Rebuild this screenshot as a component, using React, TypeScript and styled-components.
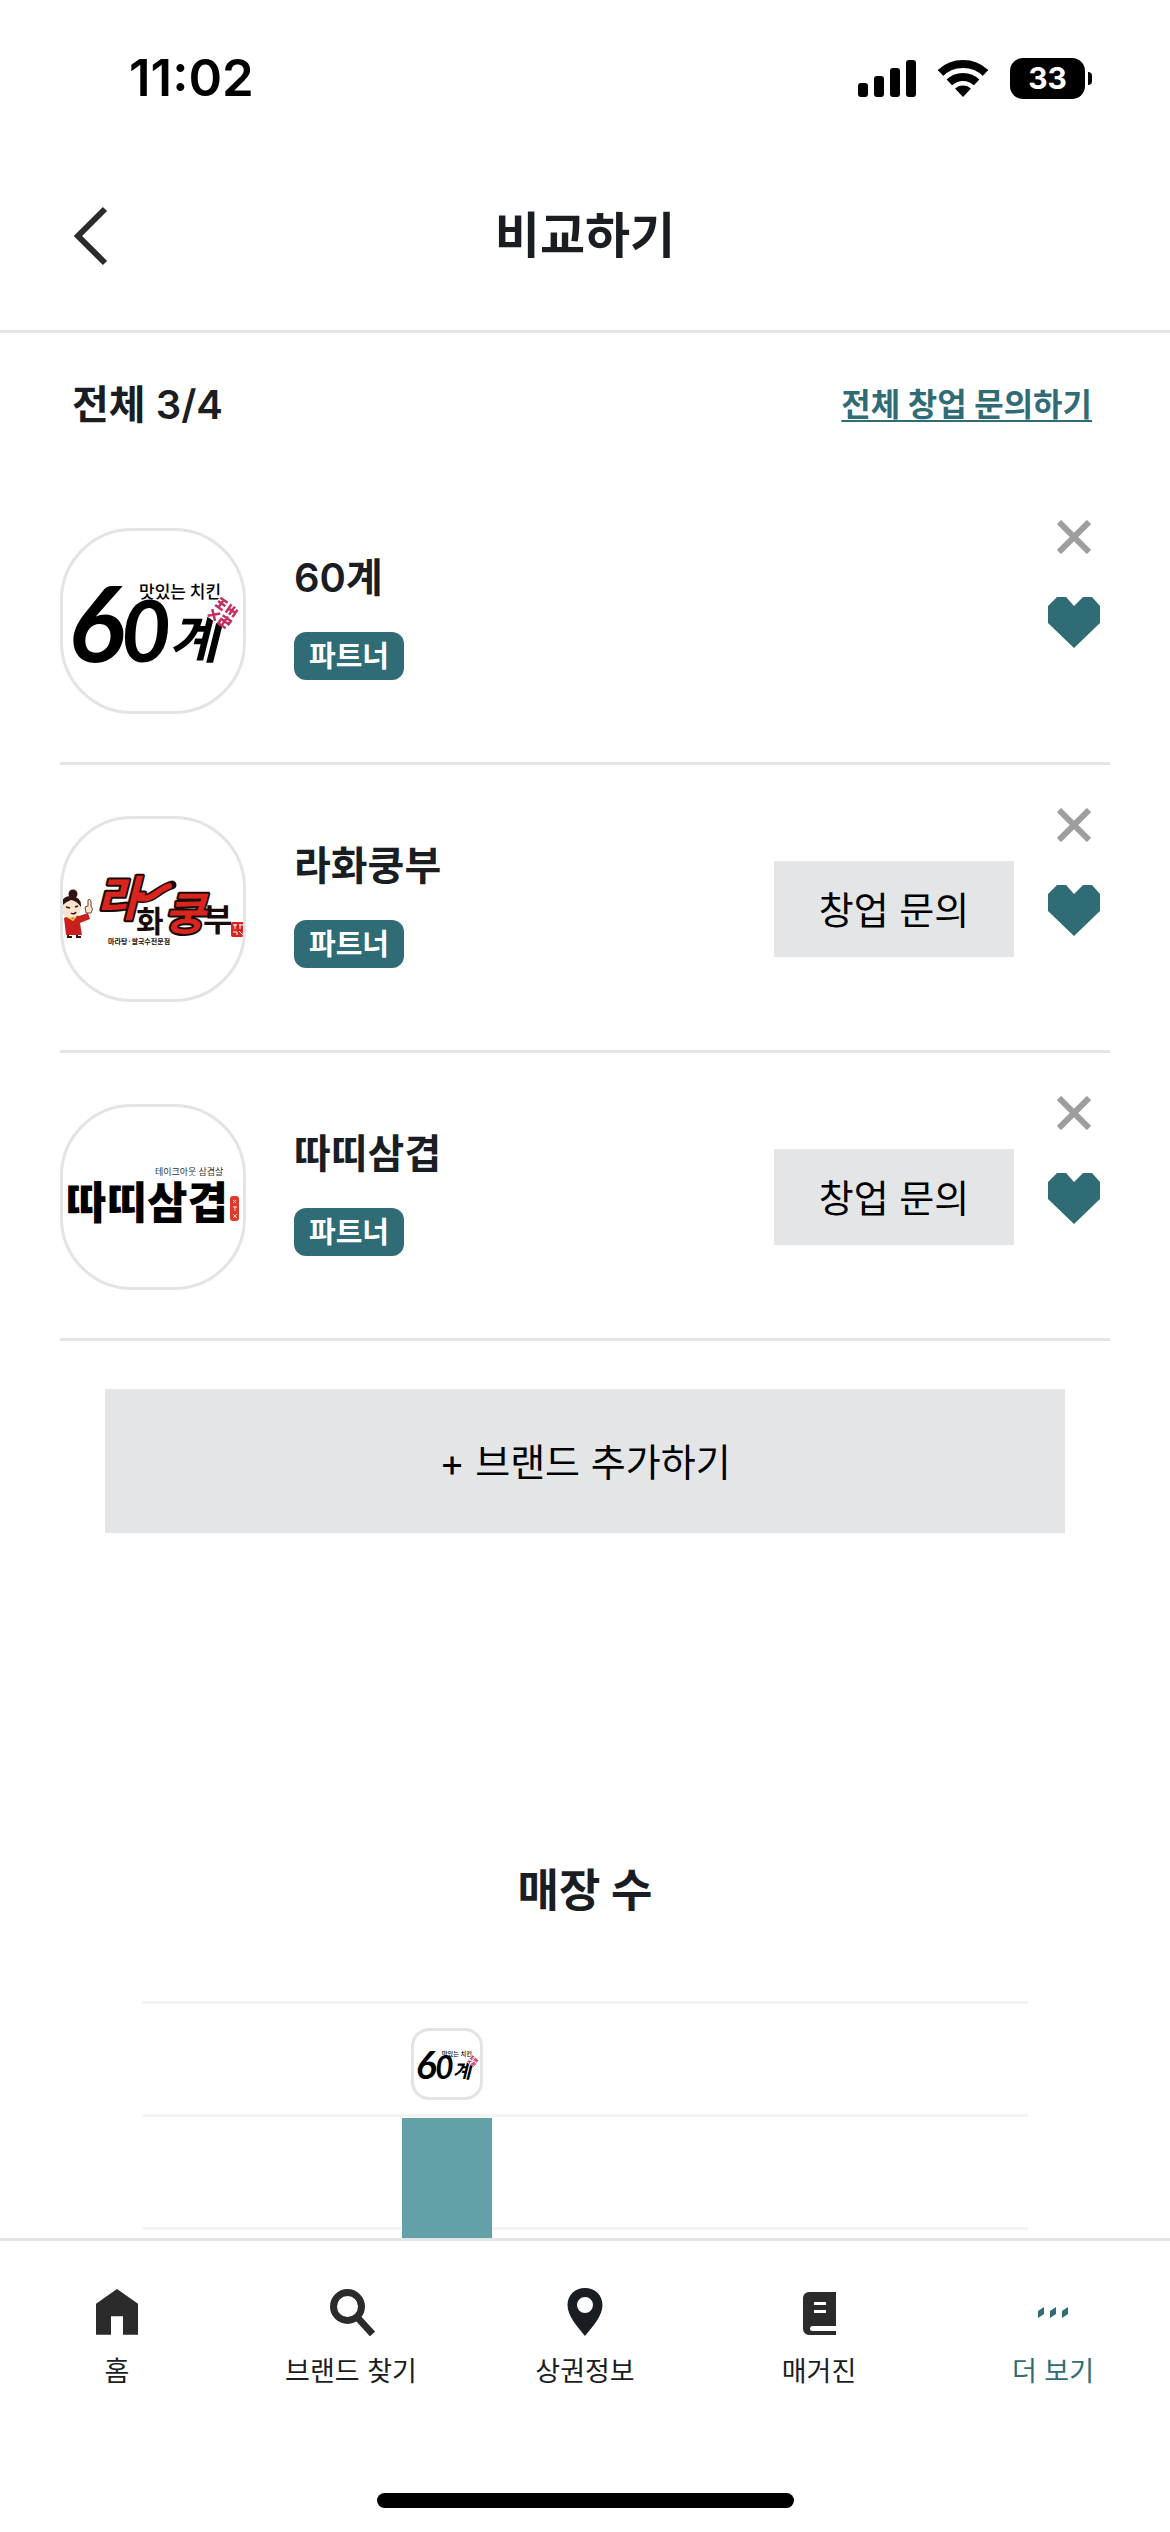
import React from "react";
import styled, { createGlobalStyle } from "styled-components";

const color = {
  text: "#1a1d22",
  icon: "#2b2b2b",
  teal: "#2f6c75",
  bar: "#62a1a8",
  line: "#e3e4e6",
  grid: "#f4f4f5",
  fill: "#e4e5e7",
  mute: "#9e9e9e",
};

const GlobalStyle = createGlobalStyle`
  *, *::before, *::after { box-sizing: border-box; }
  body {
    margin: 0;
    background: #fff;
    color: ${color.text};
    font-family: Inter, "Noto Sans CJK KR", sans-serif;
  }
  button { font: inherit; color: inherit; border: 0; padding: 0; background: none; cursor: pointer; }
  h1, h2, ul { margin: 0; padding: 0; }
  ul { list-style: none; }
  svg { display: block; }
`;

const Screen = styled.div`
  display: flex;
  flex-direction: column;
  height: 100vh;
  overflow: hidden;
`;

const StatusBar = styled.div`
  display: flex;
  justify-content: space-between;
  align-items: center;
  padding: 47px 78px 32px 129px;
  color: #000;
`;

const Clock = styled.time`
  font-size: 51px;
  line-height: 62px;
  font-weight: 600;
`;

const StatusIcons = styled.div`
  display: flex;
  align-items: center;
  gap: 22px;
`;

const Battery = styled.div`
  display: flex;
  align-items: center;
  gap: 3px;
`;

const BatteryBody = styled.span`
  width: 75px;
  border-radius: 13px;
  background: #000;
  color: #fff;
  font-size: 30px;
  line-height: 41px;
  font-weight: 700;
  text-align: center;
`;

const BatteryCap = styled.span`
  width: 4px;
  height: 13px;
  border-radius: 0 4px 4px 0;
  background: #000;
`;

const Header = styled.header`
  display: grid;
  grid-template-columns: 1fr auto 1fr;
  align-items: center;
  height: 192px;
  padding: 0 72px;
  border-bottom: 3px solid ${color.line};
  flex: none;
`;

const BackButton = styled.button`
  justify-self: start;
`;

const PageTitle = styled.h1`
  font-size: 49px;
  line-height: 72px;
  font-weight: 700;
`;

const Main = styled.main`
  flex: 1;
  min-height: 0;
  overflow-y: auto;
  scrollbar-width: none;
`;

const Summary = styled.div`
  display: flex;
  justify-content: space-between;
  align-items: center;
  height: 144px;
  padding: 0 78px 0 72px;
`;

const Count = styled.span`
  font-size: 40px;
  line-height: 56px;
  font-weight: 600;
`;

const AskAll = styled.a`
  color: ${color.teal};
  font-size: 32px;
  line-height: 56px;
  font-weight: 700;
  text-underline-offset: 4px;
  text-decoration-thickness: 2px;
`;

const BrandList = styled.ul`
  padding: 0 60px;
`;

const BrandRow = styled.li`
  display: flex;
  align-items: center;
  min-height: 288px;
  padding: 24px 10px 21px 0;
  border-bottom: 3px solid ${color.line};
`;

const LogoFrame = styled.div<{ $size: number; $radius: number }>`
  flex: none;
  width: ${(p) => p.$size}px;
  height: ${(p) => p.$size}px;
  border: 3px solid ${color.line};
  border-radius: ${(p) => p.$radius}px;
  background: #fff;
  overflow: hidden;

  svg {
    width: 100%;
    height: 100%;
  }
`;

const BrandInfo = styled.div`
  flex: 1;
  display: flex;
  flex-direction: column;
  align-items: flex-start;
  gap: 26px;
  padding: 0 48px 12px;
`;

const BrandName = styled.h2`
  font-size: 40px;
  line-height: 56px;
  font-weight: 600;
`;

const Badge = styled.span`
  padding: 2px 15px 0;
  border-radius: 12px;
  background: ${color.teal};
  color: #fff;
  font-size: 29px;
  line-height: 46px;
  font-weight: 600;
`;

const FillButton = styled.button`
  padding-bottom: 4px;
  background: ${color.fill};
  color: #000;
  font-size: 38px;
`;

const AskButton = styled(FillButton)`
  width: 240px;
  height: 96px;
  margin-right: 34px;
`;

const RowActions = styled.div`
  align-self: flex-start;
  display: flex;
  flex-direction: column;
  align-items: center;
  gap: 36px;
  padding-top: 12px;
`;

const IconButton = styled.button`
  display: grid;
  place-items: center;
  width: 52px;
  min-height: 48px;
`;

const AddBar = styled.div`
  display: flex;
  padding: 48px 105px 0;
`;

const AddButton = styled(FillButton)`
  flex: 1;
  height: 144px;
`;

const ChartSection = styled.section`
  padding: 322px 142px 60px;
`;

const ChartTitle = styled.h2`
  padding-bottom: 74px;
  font-size: 45px;
  line-height: 72px;
  font-weight: 700;
  text-align: center;
`;

const Plot = styled.div`
  display: grid;
  grid-template-areas: "plot";
`;

const GridLines = styled.div`
  grid-area: plot;
`;

const GridLine = styled.div`
  height: 113px;
  border-top: 3px solid ${color.grid};
`;

const Bars = styled.div`
  grid-area: plot;
  display: flex;
  justify-content: center;
  gap: 48px;
`;

const BarColumn = styled.div`
  display: flex;
  flex-direction: column;
  align-items: center;
  justify-content: flex-end;
  gap: 18px;
  width: 90px;
`;

const Bar = styled.div`
  width: 100%;
  background: ${color.bar};
`;

const BottomNav = styled.nav`
  flex: none;
  border-top: 3px solid ${color.line};
  background: #fff;
`;

const Tabs = styled.ul`
  display: grid;
  grid-template-columns: repeat(5, 1fr);
  padding: 47px 0 101px;
`;

const Tab = styled.a<{ $active?: boolean }>`
  display: flex;
  flex-direction: column;
  align-items: center;
  gap: 16px;
  color: ${(p) => (p.$active ? color.teal : color.text)};
  font-size: 27px;
  line-height: 40px;
  text-decoration: none;
`;

const HomeIndicator = styled.div`
  width: 417px;
  height: 15px;
  margin: 0 auto 24px;
  border-radius: 8px;
  background: #000;
`;

const SignalIcon = () => (
  <svg width="58" height="37" viewBox="0 0 58 37" aria-hidden="true">
    <rect x="0" y="23" width="10" height="14" rx="3" />
    <rect x="16" y="16" width="10" height="21" rx="3" />
    <rect x="32" y="8" width="10" height="29" rx="3" />
    <rect x="48" y="0" width="10" height="37" rx="3" />
  </svg>
);

const WifiIcon = () => (
  <svg width="50" height="37" viewBox="0 0 50 37" aria-hidden="true">
    <clipPath id="wifi-fan">
      <path d="M25 37L-5 5V-5H55V5Z" />
    </clipPath>
    <g clipPath="url(#wifi-fan)">
      <circle cx="25" cy="37" r="33" fill="none" stroke="#000" strokeWidth="8" />
      <circle cx="25" cy="37" r="20" fill="none" stroke="#000" strokeWidth="8" />
      <circle cx="25" cy="37" r="11.5" />
    </g>
  </svg>
);

const BackIcon = () => (
  <svg width="36" height="60" viewBox="0 0 36 60" fill="none" stroke={color.icon} strokeWidth="6" aria-hidden="true">
    <path d="M33 3L6 30L33 57" />
  </svg>
);

const CloseIcon = () => (
  <svg width="34" height="34" viewBox="0 0 34 34" stroke={color.mute} strokeWidth="6" aria-hidden="true">
    <path d="M2 2L32 32M32 2L2 32" />
  </svg>
);

const HeartIcon = () => (
  <svg width="52" height="51" viewBox="0 0 52 51" fill={color.teal} aria-hidden="true">
    <path d="M9 0H18L26 9L35 0H44L52 9V26L26 51L0 26V9Z" />
  </svg>
);

const HomeIcon = () => (
  <svg width="48" height="48" viewBox="0 0 48 48" fill={color.icon} aria-hidden="true">
    <path d="M24 1L45 18V53H30V32H18V53H3V18Z" transform="scale(1 .88)" />
  </svg>
);

const SearchIcon = () => (
  <svg width="48" height="48" viewBox="0 0 48 48" fill="none" stroke={color.icon} aria-hidden="true">
    <circle cx="20.500" cy="18.500" r="14" strokeWidth="7" />
    <path d="M30 29L45.500 46" strokeWidth="7" />
  </svg>
);

const PinIcon = () => (
  <svg width="48" height="48" viewBox="0 0 48 48" fill={color.text} fillRule="evenodd" aria-hidden="true">
    <path d="M24 0C14 0 6.500 7 6.500 17C6.500 28 16 38 24 48C32 38 41.500 28 41.500 17C41.500 7 34 0 24 0ZM24 9A8 8 0 1 1 24 25A8 8 0 1 1 24 9Z" />
  </svg>
);

const BookIcon = () => (
  <svg width="48" height="48" viewBox="0 0 48 48" aria-hidden="true">
    <path fill={color.icon} d="M14 4H41V38H17.500A2.500 2.500 0 0 0 17.500 43H41V47H14A6 6 0 0 1 8 41V10A6 6 0 0 1 14 4Z" />
    <path stroke="#fff" strokeWidth="3" d="M19 15.500H31M19 23.500H31" />
  </svg>
);

const MoreIcon = () => (
  <svg width="48" height="48" viewBox="0 0 48 48" fill={color.teal} aria-hidden="true">
    <path d="M9 23L15 19V26L9 30ZM21 23L27 19V26L21 30ZM33 23L39 19V26L33 30Z" />
  </svg>
);

const hangul = '"Noto Sans CJK KR", sans-serif';

const SixtyLogo = () => (
  <svg viewBox="0 0 180 180" role="img" aria-label="60계 로고">
    <g fontStyle="italic" fill="#000">
      <text x="5" y="131" fontFamily="Lato, sans-serif" fontSize="106" fontWeight="700">6</text>
      <text x="58" y="131" fontFamily="Lato, sans-serif" fontSize="86" fontWeight="700">0</text>
      <text x="106" y="127" fontFamily={hangul} fontSize="54" fontWeight="700">계</text>
    </g>
    <text x="76" y="67" fontFamily={hangul} fontSize="17" fontWeight="500">맛있는 치킨</text>
    <g transform="rotate(35 160 82)" fill="none" stroke="#c2315f" strokeWidth="2.500">
      <path fill="#fff" stroke="none" d="M148 69H172V94H148Z" />
      <path d="M149 71H158M149 75H158M153 70V80M149 80H158M162 70V80M166 70V80M170 71V80M162 75H171M149 85L158 93M158 84L149 93M161 84H171V88H162V93H171M166 82V94" />
    </g>
  </svg>
);

const LahwaLogo = () => (
  <svg viewBox="0 0 180 180" role="img" aria-label="라화쿵부 로고">
    <path d="M1 99Q9 94 16 97L25 94L27 100L17 104L19 116H3Z" fill="#c9201f" />
    <path d="M3 97L10 101L13 97" fill="none" stroke="#f1c232" strokeWidth="2" />
    <ellipse cx="8" cy="89" rx="10" ry="10" fill="#fbe3cf" />
    <path d="M-2 88Q-2 77 8 77Q19 78 18 88Q14 82 8 81Q2 83 -2 88Z" fill="#33130f" />
    <circle cx="10" cy="75" r="4.500" fill="#33130f" />
    <path d="M3 88L7 89M12 88L15 87M8 94Q11 96 13 93" fill="none" stroke="#33130f" strokeWidth="1.500" />
    <path d="M23 94L22 88L25 87V81Q27 79 28 82V87Q31 90 28 94Z" fill="#fbe3cf" stroke="#6b4a3a" strokeWidth="1" />
    <path d="M5 116V118H9M14 116V118H18" stroke="#33130f" strokeWidth="2" fill="none" />
    <path d="M76 79C90 82 94 70 109 66" fill="none" stroke="#1a0b0a" strokeWidth="9" strokeLinecap="round" />
    <g fontFamily={hangul} fontWeight="700" strokeLinejoin="round">
      <g fill="#d9251d" stroke="#1a0b0a" strokeWidth="4" paintOrder="stroke">
        <text x="33" y="97" fontSize="48" fontStyle="italic">라</text>
        <text x="101" y="111" fontSize="45" fontStyle="italic">쿵</text>
      </g>
      <g fill="#1a0b0a">
        <text x="73" y="113" fontSize="30">화</text>
        <text x="140" y="112" fontSize="32">부</text>
        <text x="45" y="125" fontSize="7">마라탕·쌀국수전문점</text>
      </g>
    </g>
    <path d="M76 79C90 82 94 71 106 67" fill="none" stroke="#d9251d" strokeWidth="6" strokeLinecap="round" />
    <rect x="168" y="103" width="16" height="15" rx="2" fill="#d9251d" />
    <path d="M170 106H174M172 105V110M176 106H181M177 105V110M170 113H174V116M176 112L180 116" stroke="#fff" strokeWidth="1" fill="none" />
  </svg>
);

const TtattiLogo = () => (
  <svg viewBox="0 0 180 180" role="img" aria-label="따띠삼겹 로고">
    <g fontFamily={hangul} fill="#000">
      <text x="92" y="68" fontSize="9" fill="#333">테이크아웃 삼겹살</text>
      <text x="3" y="112" fontSize="44" fontWeight="900">따띠삼겹</text>
    </g>
    <rect x="167" y="89" width="9" height="25" rx="3" fill="#e0392b" />
    <path d="M170 93L173 96M173 93L170 96M170 100H174M172 99V104M170 107L174 111M174 107L170 111" stroke="#fbd9d4" strokeWidth="1" />
  </svg>
);

const brands = [
  { name: "60계", Logo: SixtyLogo, ask: false, share: 85.2 },
  { name: "라화쿵부", Logo: LahwaLogo, ask: true, share: 16 },
  { name: "따띠삼겹", Logo: TtattiLogo, ask: true, share: 8 },
];

const gridRows = [0, 1, 2, 3, 4, 5, 6];

const tabs = [
  { label: "홈", Icon: HomeIcon },
  { label: "브랜드 찾기", Icon: SearchIcon },
  { label: "상권정보", Icon: PinIcon },
  { label: "매거진", Icon: BookIcon },
  { label: "더 보기", Icon: MoreIcon, active: true },
];

export default function App() {
  return (
    <Screen>
      <GlobalStyle />
      <StatusBar>
        <Clock>11:02</Clock>
        <StatusIcons>
          <SignalIcon />
          <WifiIcon />
          <Battery>
            <BatteryBody>33</BatteryBody>
            <BatteryCap />
          </Battery>
        </StatusIcons>
      </StatusBar>

      <Header>
        <BackButton type="button" aria-label="뒤로">
          <BackIcon />
        </BackButton>
        <PageTitle>비교하기</PageTitle>
      </Header>

      <Main>
        <Summary>
          <Count>전체 3/4</Count>
          <AskAll href="#ask-all">전체 창업 문의하기</AskAll>
        </Summary>

        <BrandList>
          {brands.map(({ name, Logo, ask }) => (
            <BrandRow key={name}>
              <LogoFrame $size={186} $radius={72}>
                <Logo />
              </LogoFrame>
              <BrandInfo>
                <BrandName>{name}</BrandName>
                <Badge>파트너</Badge>
              </BrandInfo>
              {ask && <AskButton type="button">창업 문의</AskButton>}
              <RowActions>
                <IconButton type="button" aria-label={`${name} 삭제`}>
                  <CloseIcon />
                </IconButton>
                <IconButton type="button" aria-label={`${name} 찜`} aria-pressed="true">
                  <HeartIcon />
                </IconButton>
              </RowActions>
            </BrandRow>
          ))}
        </BrandList>

        <AddBar>
          <AddButton type="button">+ 브랜드 추가하기</AddButton>
        </AddBar>

        <ChartSection>
          <ChartTitle>매장 수</ChartTitle>
          <Plot>
            <GridLines>
              {gridRows.map((n) => (
                <GridLine key={n} />
              ))}
            </GridLines>
            <Bars>
              {brands.map(({ name, Logo, share }) => (
                <BarColumn key={name}>
                  <LogoFrame $size={72} $radius={18}>
                    <Logo />
                  </LogoFrame>
                  <Bar style={{ height: `${share}%` }} />
                </BarColumn>
              ))}
            </Bars>
          </Plot>
        </ChartSection>
      </Main>

      <BottomNav>
        <Tabs>
          {tabs.map(({ label, Icon, active }) => (
            <li key={label}>
              <Tab href="#tab" $active={active} aria-current={active ? "page" : undefined}>
                <Icon />
                {label}
              </Tab>
            </li>
          ))}
        </Tabs>
        <HomeIndicator />
      </BottomNav>
    </Screen>
  );
}
